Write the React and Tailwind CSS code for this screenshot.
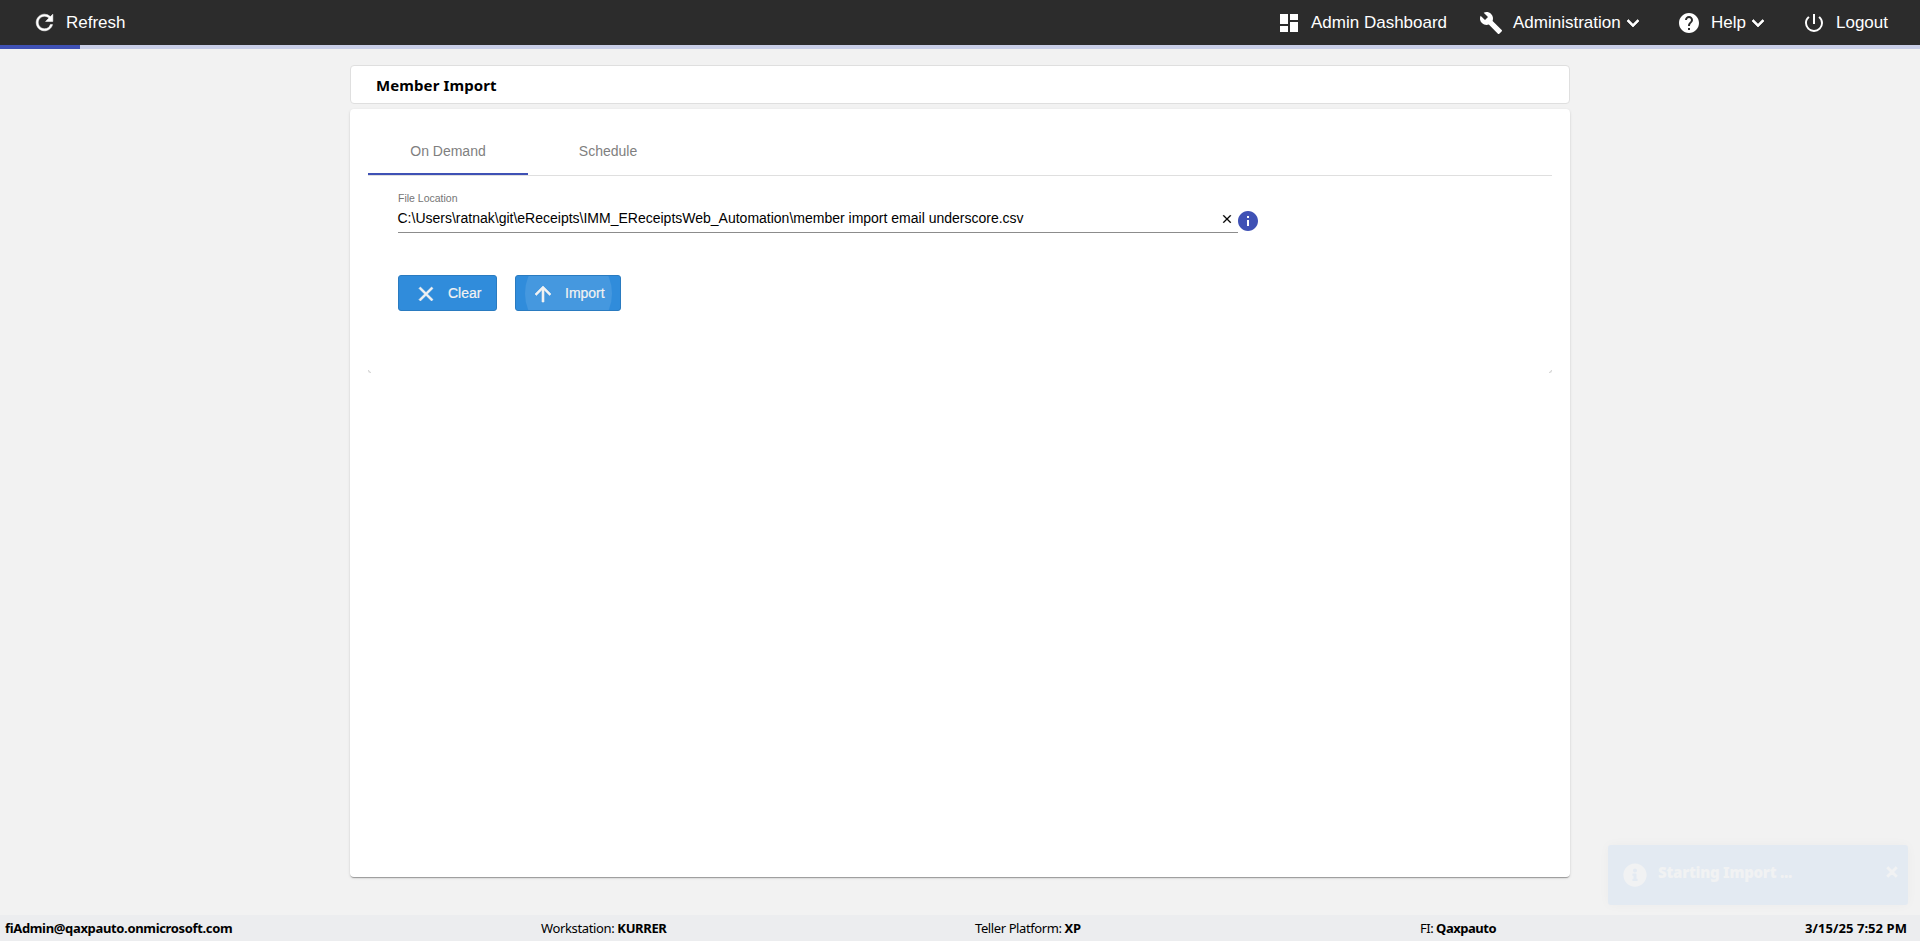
import {
  MdBuild,
  MdDashboard,
  MdHelp,
  MdInfo,
  MdPowerSettingsNew,
} from "react-icons/md";
import { FaInfoCircle } from "react-icons/fa";

const glyphs = {
  refresh:
    "M17.65 6.35A7.958 7.958 0 0 0 12 4c-4.42 0-7.99 3.58-7.99 8s3.57 8 7.99 8c3.73 0 6.84-2.55 7.73-6h-2.08A5.99 5.99 0 0 1 12 18c-3.31 0-6-2.69-6-6s2.69-6 6-6c1.66 0 3.14.69 4.22 1.78L13 11h7V4l-2.35 2.35z",
  close:
    "M19 6.41 17.59 5 12 10.59 6.41 5 5 6.41 10.59 12 5 17.59 6.41 19 12 13.41 17.59 19 19 17.59 13.41 12z",
  up: "m4 12 1.41 1.41L11 7.83V20h2V7.83l5.58 5.59L20 12l-8-8-8 8z",
  down: "M16.59 8.59 12 13.17 7.41 8.59 6 10l6 6 6-6z",
};

// Heavier variant of the material icons, the stroke thickens the glyph
function BoldIcon({ name, size = 24, weight = 0.6, className = "" }) {
  return (
    <svg
      viewBox="0 0 24 24"
      width={size}
      height={size}
      fill="currentColor"
      stroke="currentColor"
      strokeWidth={weight}
      className={`shrink-0 ${className}`}
    >
      <path d={glyphs[name]} />
    </svg>
  );
}

const navItems = [
  { label: "Admin Dashboard", icon: MdDashboard, className: "w-[202px] gap-[10px]" },
  { label: "Administration", icon: MdBuild, className: "w-[198px] gap-[10px]", menu: true },
  { label: "Help", icon: MdHelp, className: "w-[125px] gap-[10px]", menu: true },
  { label: "Logout", icon: MdPowerSettingsNew, className: "w-[118px] gap-[10px]" },
];

function Header() {
  return (
    <header className="flex h-[45px] shrink-0 items-center justify-between bg-[#2c2c2c] text-[17px] leading-6 text-white">
      <button className="flex items-center gap-[9px] pl-8">
        <BoldIcon name="refresh" size={25} weight={0.5} />
        <span>Refresh</span>
      </button>
      <nav className="flex">
        {navItems.map(({ label, icon: Icon, className, menu }) => (
          <button className={`flex shrink-0 items-center whitespace-nowrap ${className}`} key={label}>
            <Icon size={24} className="shrink-0" />
            <span className="flex items-center">
              {label}
              {menu && <BoldIcon name="down" weight={0.7} />}
            </span>
          </button>
        ))}
      </nav>
    </header>
  );
}

function Tabs() {
  return (
    <div className="flex h-[49px] border-b border-[#dfdfdf] text-sm text-[#7f7f7f]">
      <button className="h-12 w-40 border-b-2 border-[#3f51b5] pt-px">On Demand</button>
      <button className="h-12 w-40 border-b-2 border-transparent pt-px">Schedule</button>
    </div>
  );
}

function ImportForm() {
  return (
    <div className="pl-[30px] pt-4">
      <div className="flex">
        <div className="h-[41px] w-[840px] border-b border-[#8c8c8c]">
          <p className="text-[10.5px] leading-3 text-[#757575]">File Location</p>
          <div className="flex items-center justify-between pr-1 pt-1 text-black">
            <span className="-ml-[0.5px] pt-px text-sm leading-[18px]">
              C:\Users\ratnak\git\eReceipts\IMM_EReceiptsWeb_Automation\member import email underscore.csv
            </span>
            <BoldIcon name="close" size={14} weight={0.4} className="mt-[3px]" />
          </div>
        </div>
        <MdInfo size={24} className="-ml-[2.5px] mt-[17px] text-[#3f51b5]" />
      </div>
      <div className="mt-[42px] flex gap-[18px] text-sm text-[#f2f2f2]">
        <button className="flex h-9 w-[99px] items-center rounded-[3px] border border-[#2a7bc0] bg-[#308cdb] pl-[15px]">
          <BoldIcon name="close" className="mt-0.5" />
          <span className="ml-[10px] [-webkit-text-stroke:0.2px]">Clear</span>
        </button>
        <button className="relative flex h-9 w-[106px] items-center overflow-hidden rounded-[3px] border border-[#2a7bc0] bg-[#308cdb] pl-[15px]">
          <span className="absolute -top-[26px] left-[9px] size-[87px] rounded-full bg-white/10" />
          <BoldIcon name="up" className="relative mt-0.5" />
          <span className="relative ml-[10px] [-webkit-text-stroke:0.2px]">Import</span>
        </button>
      </div>
    </div>
  );
}

function Toast() {
  return (
    <div className="absolute bottom-9 right-3 flex h-[60px] w-[300px] rounded-[3px] bg-[#e3eaf2] font-['Noto_Sans',sans-serif] text-[#f1f2f3] shadow-[0_0_12px_rgba(0,0,0,0.03)]">
      <FaInfoCircle size={24} className="ml-[15px] mt-[18px]" />
      <span className="ml-[11px] mt-4 text-[15px] font-black leading-[22px] tracking-[-0.25px]">
        Starting Import ...
      </span>
      <BoldIcon name="close" size={16} weight={2.4} className="ml-auto mr-2 mt-[19px]" />
    </div>
  );
}

function Footer() {
  return (
    <footer className="flex h-[26px] shrink-0 items-center whitespace-nowrap bg-[#ecedef] pl-[5px] pr-[13px] pt-px font-['Noto_Sans',sans-serif] text-[13px] text-black">
      <b className="w-[536px] tracking-[-0.34px]">fiAdmin@qaxpauto.onmicrosoft.com</b>
      <span className="w-[434px] tracking-[-0.36px]">
        Workstation: <b>KURRER</b>
      </span>
      <span className="w-[445px] tracking-[-0.4px]">
        Teller Platform: <b>XP</b>
      </span>
      <span className="tracking-[-0.48px]">
        FI: <b>Qaxpauto</b>
      </span>
      <b className="ml-auto tracking-[0.06px]">3/15/25 7:52 PM</b>
    </footer>
  );
}

export default function App() {
  return (
    <div className="relative flex h-[941px] w-full flex-col overflow-hidden bg-[#f2f2f2] font-['Liberation_Sans',Arial,sans-serif]">
      <Header />
      <div className="h-1 shrink-0 bg-[#c9cee8]">
        <div className="h-full w-20 bg-[#3f51b5]" />
      </div>
      <main className="mx-auto flex w-[1220px] grow flex-col pt-4">
        <h1 className="flex h-[39px] items-center rounded-[4px] border border-[#dfdfdf] bg-white pl-[25px] pt-px font-['Noto_Sans',sans-serif] text-[15px] font-bold tracking-[0.1px] text-black">
          Member Import
        </h1>
        <section className="mt-[5px] h-[768px] rounded-[4px] bg-white px-[18px] pt-[18px] shadow-[0_2px_1px_-1px_rgba(0,0,0,0.2),0_1px_1px_0_rgba(0,0,0,0.14),0_1px_3px_0_rgba(0,0,0,0.12)]">
          <Tabs />
          <ImportForm />
          <div className="mt-[59px] flex justify-between">
            <span className="size-[3px] rounded-bl-[3px] border-b border-l border-[#d5d5d5]" />
            <span className="size-[3px] rounded-br-[3px] border-b border-r border-[#d5d5d5]" />
          </div>
        </section>
      </main>
      <Footer />
      <Toast />
    </div>
  );
}
